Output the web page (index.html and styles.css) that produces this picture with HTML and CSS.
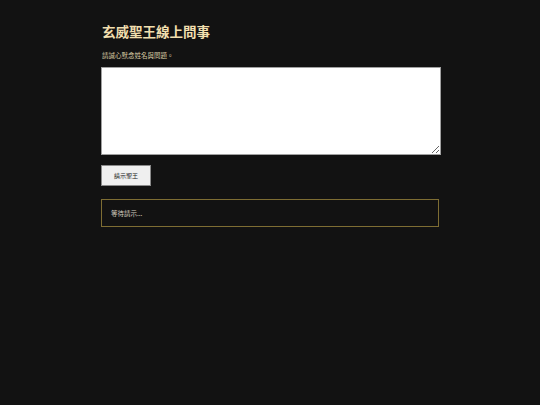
FILE: index.html
```html
<!DOCTYPE html>
<html lang="zh-Hant">
<head>
<meta charset="utf-8">
<title>玄威聖王線上問事</title>
<link rel="stylesheet" href="styles.css">
</head>
<body>
<main class="wrap">
  <h1 class="title">玄威聖王線上問事</h1>
  <p class="hint">請誠心默念姓名與問題。</p>
  <textarea class="question"></textarea>
  <button class="ask" type="button">請示聖王</button>
  <div class="result">等待請示...</div>
</main>
</body>
</html>
```
FILE: styles.css
```css
html, body {
  margin: 0;
  padding: 0;
  background: #121212;
}
body {
  font-family: "Noto Sans CJK TC", "Noto Sans", sans-serif;
  color: #d8ccaa;
}
.wrap {
  width: 338px;
  margin: 0 auto;
  padding-top: 21px;
  display: flex;
  flex-direction: column;
  align-items: flex-start;
}
.title {
  margin: 0 0 0 1px;
  font-size: 13.5px;
  line-height: 20px;
  font-weight: 700;
  color: #f1dfae;
}
.hint {
  margin: 10px 0 0 1px;
  font-size: 6.5px;
  line-height: 9px;
  color: #d6c9a2;
}
.question {
  margin: 7px 0 0 0;
  width: 340px;
  height: 88px;
  box-sizing: border-box;
  border: 1px solid #a0a0a0;
  background: #ffffff;
  padding: 2px;
  resize: vertical;
}
.ask {
  margin-top: 10px;
  width: 50px;
  height: 21px;
  box-sizing: border-box;
  border: 1px solid #8a8a8a;
  background: #efefef;
  font-family: "Noto Sans CJK TC", sans-serif;
  font-size: 6px;
  color: #222;
  padding: 0;
}
.result {
  margin-top: 13px;
  width: 338px;
  height: 28px;
  box-sizing: border-box;
  border: 1px solid #7e6d33;
  padding: 0 9px;
  display: flex;
  align-items: center;
  font-size: 6.5px;
  color: #d6cfc0;
}
```
